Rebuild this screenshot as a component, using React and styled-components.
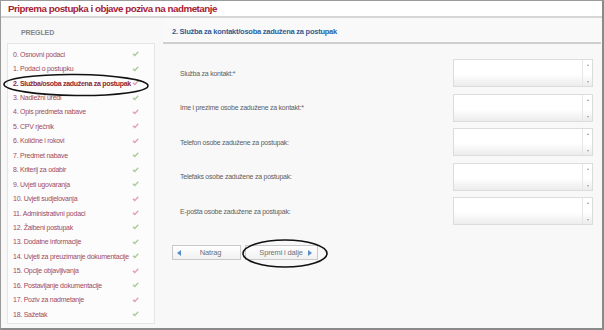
import React from "react";
import styled, { createGlobalStyle } from "styled-components";

const Global = createGlobalStyle`
  html, body { margin: 0; padding: 0; background: #ffffff; }
  body { font-family: "Liberation Sans", Arial, sans-serif; }
`;

const Frame = styled.div`
  position: relative;
  box-sizing: border-box;
  width: 604px;
  height: 330px;
  border: 1px solid #9a9a9a;
  border-right: 2px solid #8a8a8a;
  border-bottom: 2px solid #8a8a8a;
  background: #f8f8f8;
  display: flex;
  flex-direction: column;
  overflow: hidden;
`;

const TitleBar = styled.div`
  height: 14px;
  background: #ffffff;
  border-bottom: 2px solid #d6d6d6;
  display: flex;
  align-items: center;
  padding-left: 7px;
  padding-top: 1px;
`;

const Title = styled.h1`
  margin: 0;
  font-size: 9.8px;
  font-weight: bold;
  letter-spacing: -0.5px;
  color: #a51d36;
  line-height: 12px;
`;

const Body = styled.div`
  flex: 1;
  display: flex;
  min-height: 0;
`;

const Sidebar = styled.aside`
  width: 148px;
  padding-left: 6px;
  display: flex;
  flex-direction: column;
`;

const SideHeading = styled.div`
  height: 8px;
  padding: 11px 0 6px 14px;
  font-size: 7px;
  font-weight: bold;
  letter-spacing: -0.1px;
  line-height: 8px;
  color: #858585;
`;

const SideBox = styled.ul`
  list-style: none;
  margin: 0;
  padding: 3px 0 0 0;
  height: 281px;
  box-sizing: border-box;
  background: #fcfcfc;
  border: 1px solid #e6e6e6;
`;

const SideItem = styled.li`
  height: 14.45px;
  display: flex;
  align-items: center;
  justify-content: space-between;
  padding: 0 15px 0 5px;
  font-size: 7px;
  letter-spacing: ${(p) => (p.$active ? "-0.3px" : "-0.25px")};
  font-weight: ${(p) => (p.$active ? "bold" : "normal")};
  color: ${(p) => (p.$active ? "#8e1f35" : "#a04a5c")};
  white-space: nowrap;
`;

const CheckIcon = ({ ok }) => (
  <svg width="7" height="6" viewBox="0 0 8 7">
    <path
      d="M0.4 3.8 L2.2 2.6 L3.2 4 L6.6 0.4 L7.8 1.4 L3.2 6.4 Z"
      fill={ok ? "#a9cb9a" : "#e3a0ae"}
    />
  </svg>
);

const Main = styled.main`
  flex: 1;
  margin-left: 8px;
  display: flex;
  flex-direction: column;
`;

const MainHeader = styled.div`
  height: 26px;
  border-bottom: 2px solid #cfcfcf;
  margin-right: 1px;
  display: flex;
  align-items: flex-end;
  padding: 0 0 6px 9px;
  box-sizing: border-box;
  background: #f9f9f9;
`;

const MainTitle = styled.h2`
  margin: 0;
  font-size: 7.5px;
  font-weight: bold;
  letter-spacing: -0.25px;
  color: #2f5e98;
  line-height: 9px;
`;

const Form = styled.div`
  display: grid;
  grid-template-columns: 1fr 140px;
  row-gap: 6.6px;
  align-items: center;
  padding: 15px 9px 0 17px;
`;

const Label = styled.label`
  font-size: 7px;
  letter-spacing: -0.25px;
  color: #5e5e5e;
`;

const Field = styled.div`
  height: 28px;
  box-sizing: border-box;
  display: flex;
  border: 1px solid #dcdcdc;
  background: linear-gradient(to bottom, #ffffff 55%, #ececec 100%);
`;

const Area = styled.textarea`
  flex: 1;
  border: none;
  outline: none;
  resize: none;
  background: transparent;
  overflow: hidden;
  padding: 0;
`;

const Track = styled.div`
  width: 9px;
  border-left: 1px solid #e6e6e6;
  display: flex;
  flex-direction: column;
  justify-content: space-between;
  align-items: center;
  padding: 4px 0 3px;
`;

const TinyArrow = styled.span`
  width: 0;
  height: 0;
  border-left: 1.5px solid transparent;
  border-right: 1.5px solid transparent;
  ${(p) =>
    p.$down
      ? "border-top: 2px solid #9a9a9a;"
      : "border-bottom: 2px solid #9a9a9a;"}
`;

const Buttons = styled.div`
  display: flex;
  gap: 4px;
  padding: 20px 0 0 9px;
`;

const Button = styled.button`
  height: 15px;
  width: ${(p) => p.$w}px;
  box-sizing: border-box;
  display: flex;
  align-items: center;
  padding: 0 ${(p) => (p.$next ? "5px" : "0")} 0 ${(p) => (p.$next ? "8px" : "4px")};
  border: 1px solid #c9c9c9;
  background: linear-gradient(to bottom, #ffffff, #f1f1f1);
  font-family: "Liberation Sans", Arial, sans-serif;
  font-size: 7.5px;
  letter-spacing: -0.15px;
  color: #707070;
  cursor: pointer;
`;

const ButtonText = styled.span`
  flex: 1;
  text-align: center;
`;

const Arrow = styled.span`
  width: 0;
  height: 0;
  border-top: 3.5px solid transparent;
  border-bottom: 3.5px solid transparent;
  ${(p) =>
    p.$right
      ? "border-left: 4px solid #5a8dca;"
      : "border-right: 4px solid #5a8dca;"}
`;

const Annotation = styled.svg`
  position: absolute;
  left: 0;
  top: 0;
  width: 604px;
  height: 330px;
  pointer-events: none;
`;

const items = [
  ["0. Osnovni podaci", true],
  ["1. Podaci o postupku", true],
  ["2. Služba/osoba zadužena za postupak", false, true],
  ["3. Nadležni uredi", true],
  ["4. Opis predmeta nabave", false],
  ["5. CPV rječnik", false],
  ["6. Količine i rokovi", false],
  ["7. Predmet nabave", true],
  ["8. Kriterij za odabir", true],
  ["9. Uvjeti ugovaranja", true],
  ["10. Uvjeti sudjelovanja", false],
  ["11. Administrativni podaci", false],
  ["12. Žalbeni postupak", true],
  ["13. Dodatne informacije", true],
  ["14. Uvjeti za preuzimanje dokumentacije", true],
  ["15. Opcije objavljivanja", false],
  ["16. Postavljanje dokumentacije", true],
  ["17. Poziv za nadmetanje", false],
  ["18. Sažetak", true],
];

const fields = [
  "Služba za kontakt:*",
  "Ime i prezime osobe zadužene za kontakt:*",
  "Telefon osobe zadužene za postupak:",
  "Telefaks osobe zadužene za postupak:",
  "E-pošta osobe zadužene za postupak:",
];

export default function App() {
  return (
    <>
      <Global />
      <Frame>
        <TitleBar>
          <Title>Priprema postupka i objave poziva na nadmetanje</Title>
        </TitleBar>
        <Body>
          <Sidebar>
            <SideHeading>PREGLED</SideHeading>
            <SideBox>
              {items.map(([t, ok, active]) => (
                <SideItem key={t} $active={active}>
                  <span>{t}</span>
                  <CheckIcon ok={ok} />
                </SideItem>
              ))}
            </SideBox>
          </Sidebar>
          <Main>
            <MainHeader>
              <MainTitle>2. Služba za kontakt/osoba zadužena za postupak</MainTitle>
            </MainHeader>
            <Form>
              {fields.map((f) => (
                <React.Fragment key={f}>
                  <Label>{f}</Label>
                  <Field>
                    <Area />
                    <Track>
                      <TinyArrow />
                      <TinyArrow $down />
                    </Track>
                  </Field>
                </React.Fragment>
              ))}
            </Form>
            <Buttons>
              <Button $w={69}>
                <Arrow />
                <ButtonText>Natrag</ButtonText>
              </Button>
              <Button $w={73} $next>
                <ButtonText>Spremi i dalje</ButtonText>
                <Arrow $right />
              </Button>
            </Buttons>
          </Main>
        </Body>
        <Annotation viewBox="0 0 604 330">
          <ellipse cx="75" cy="84" rx="72" ry="10.5" fill="none" stroke="#111" strokeWidth="1.6" transform="rotate(0.6 75 84)" />
          <ellipse cx="284" cy="252.5" rx="42" ry="13.5" fill="none" stroke="#111" strokeWidth="1.6" />
        </Annotation>
      </Frame>
    </>
  );
}
